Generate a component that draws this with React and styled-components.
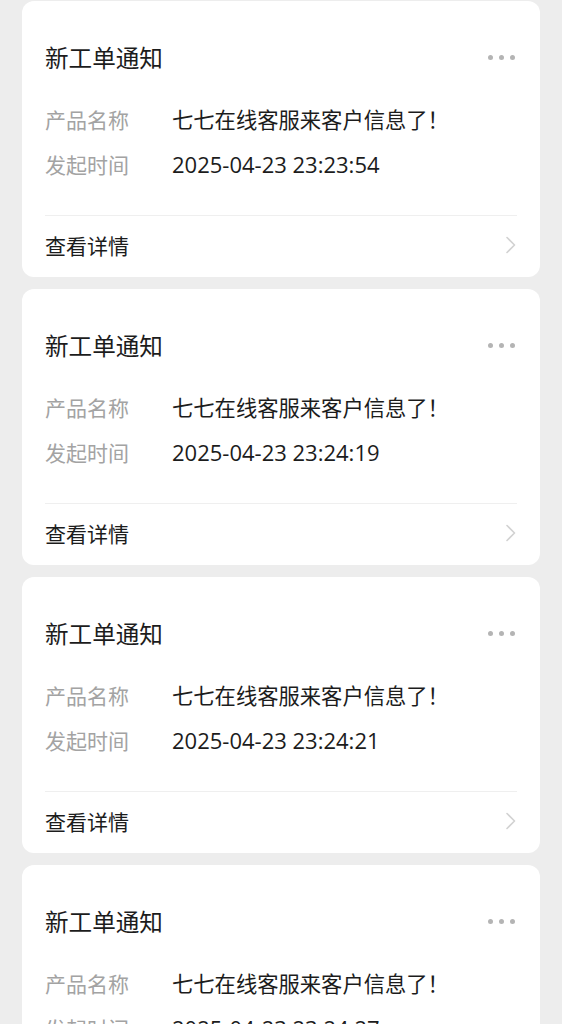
import styled, { createGlobalStyle } from 'styled-components'

const GlobalStyle = createGlobalStyle`
  html, body {
    margin: 0;
    padding: 0;
    background: #ededed;
  }
  body {
    font-family: "Noto Sans CJK SC", "Noto Sans", sans-serif;
  }
`

const Page = styled.div`
  display: flex;
  flex-direction: column;
  gap: 12px;
  padding: 1px 22px 20px;
`

const Card = styled.div`
  background: #ffffff;
  border-radius: 12px;
  padding: 40px 23px 0;
  display: flex;
  flex-direction: column;
`

const Header = styled.div`
  display: flex;
  align-items: center;
  justify-content: space-between;
  height: 32px;
`

const Title = styled.div`
  font-size: 23.6px;
  line-height: 32px;
  color: #1c1c1c;
`

const Dots = styled.div`
  display: flex;
  gap: 6px;
  margin-right: 2px;
  span {
    width: 5px;
    height: 5px;
    border-radius: 50%;
    background: #b4b4b4;
  }
`

const Info = styled.div`
  margin-top: 23px;
  display: flex;
  flex-direction: column;
`

const Row = styled.div`
  display: grid;
  grid-template-columns: 127px 1fr;
  height: 45px;
  align-items: center;
  font-size: 21px;
`

const Label = styled.span`
  color: #a3a3a3;
`

const Value = styled.span`
  color: #1c1c1c;
  font-family: ${(p) => (p.$numeric ? '"Open Sans", "Noto Sans CJK SC", sans-serif' : 'inherit')};
  font-size: ${(p) => (p.$numeric ? '22px' : '21.3px')};
`

const Footer = styled.div`
  margin-top: 29px;
  border-top: 1px solid #efefef;
  height: 62px;
  padding-bottom: 4px;
  box-sizing: border-box;
  display: flex;
  align-items: center;
  justify-content: space-between;
  font-size: 21px;
  color: #1c1c1c;
`

const Chevron = () => (
  <svg width="12" height="18" viewBox="0 0 12 18" fill="none">
    <path d="M2 1.5 L9.5 9 L2 16.5" stroke="#d2d2d2" strokeWidth="1.6" strokeLinecap="round" strokeLinejoin="round" />
  </svg>
)

const items = [
  '2025-04-23 23:23:54',
  '2025-04-23 23:24:19',
  '2025-04-23 23:24:21',
  '2025-04-23 23:24:27',
]

export default function App() {
  return (
    <>
      <GlobalStyle />
      <Page>
        {items.map((time) => (
          <Card key={time}>
            <Header>
              <Title>新工单通知</Title>
              <Dots>
                <span />
                <span />
                <span />
              </Dots>
            </Header>
            <Info>
              <Row>
                <Label>产品名称</Label>
                <Value>七七在线客服来客户信息了！</Value>
              </Row>
              <Row>
                <Label>发起时间</Label>
                <Value $numeric>{time}</Value>
              </Row>
            </Info>
            <Footer>
              <span>查看详情</span>
              <Chevron />
            </Footer>
          </Card>
        ))}
      </Page>
    </>
  )
}
